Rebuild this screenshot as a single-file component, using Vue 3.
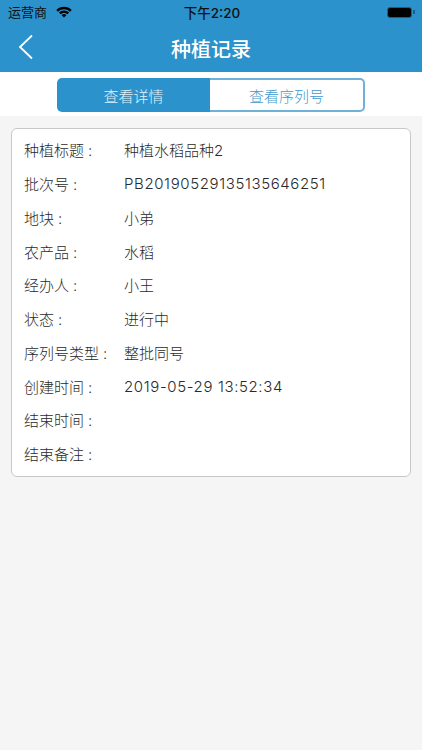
<script setup>
const rows = [
  { label: '种植标题', value: '种植水稻品种2' },
  { label: '批次号', value: 'PB20190529135135646251', spaced: true },
  { label: '地块', value: '小弟' },
  { label: '农产品', value: '水稻' },
  { label: '经办人', value: '小王' },
  { label: '状态', value: '进行中' },
  { label: '序列号类型', value: '整批同号' },
  { label: '创建时间', value: '2019-05-29 13:52:34', spaced: true },
  { label: '结束时间', value: '' },
  { label: '结束备注', value: '' },
]
</script>

<template>
  <div class="page">
    <header class="header">
      <div class="status">
        <div class="status-left">
          <span class="carrier">运营商</span>
          <svg class="wifi" width="16" height="12" viewBox="0 0 16 12">
            <path d="M0.3 3.9 A11 11 0 0 1 15.7 3.9 L14 5.7 A8.6 8.6 0 0 0 2 5.7 Z" fill="#000" />
            <path d="M3 6.6 A7.2 7.2 0 0 1 13 6.6 L11.3 8.3 A4.8 4.8 0 0 0 4.7 8.3 Z" fill="#000" />
            <path d="M5.6 9.2 A3.4 3.4 0 0 1 10.4 9.2 L8 11.6 Z" fill="#000" />
          </svg>
        </div>
        <span class="time">下午2:20</span>
        <div class="battery"><div class="battery-fill"></div><div class="battery-cap"></div></div>
      </div>
      <div class="nav">
        <svg class="back" width="16" height="26" viewBox="0 0 16 26">
          <path d="M14 1.5 L2 13 L14 24.5" fill="none" stroke="#fff" stroke-width="1.8" />
        </svg>
        <span class="title">种植记录</span>
      </div>
    </header>
    <div class="tabs-bar">
      <div class="tabs">
        <div class="tab active">查看详情</div>
        <div class="tab">查看序列号</div>
      </div>
    </div>
    <section class="card">
      <div v-for="r in rows" :key="r.label" class="row">
        <span class="label">{{ r.label }}<span class="colon">:</span></span>
        <span class="value" :class="{ spaced: r.spaced }">{{ r.value }}</span>
      </div>
    </section>
  </div>
</template>

<style>
html, body { margin: 0; background: #f5f5f5; }
</style>

<style scoped>
.page {
  width: 422px;
  height: 750px;
  background: #f5f5f5;
  font-family: Inter, "Noto Sans CJK SC", sans-serif;
  overflow: hidden;
}
.header { background: #2b92cc; height: 72px; }
.status {
  height: 24px;
  position: relative;
  display: flex;
  align-items: center;
  justify-content: space-between;
  padding: 0 7px 0 8px;
}
.status-left { display: flex; align-items: center; gap: 9px; }
.carrier { font-size: 13px; color: #111; line-height: 24px; }
.wifi { display: block; }
.time {
  position: absolute;
  left: 0;
  right: 0;
  text-align: center;
  font-size: 13.5px;
  font-weight: 500;
  color: #111;
  padding-left: 2px;
}
.battery {
  display: flex;
  align-items: center;
  width: 28px;
  height: 12px;
}
.battery-fill {
  width: 23px;
  height: 9px;
  background: #000;
  border: 1px solid #1c5f86;
  border-radius: 3px;
}
.battery-cap { width: 1.5px; height: 4px; background: #1c5f86; margin-left: 1px; }
.nav {
  height: 48px;
  position: relative;
  display: flex;
  align-items: center;
  justify-content: center;
}
.back { position: absolute; left: 18px; top: 10px; }
.title { color: #fff; font-size: 20px; font-weight: 500; }
.tabs-bar {
  background: #fff;
  height: 44px;
  padding-top: 6px;
  box-sizing: border-box;
  display: flex;
  justify-content: center;
  align-items: flex-start;
}
.tabs {
  width: 308px;
  height: 34px;
  display: flex;
}
.tab {
  flex: 1;
  box-sizing: border-box;
  display: flex;
  align-items: center;
  justify-content: center;
  font-size: 15px;
  font-weight: 300;
  color: #3f98cd;
  background: #fff;
  border: 2px solid #6fb2d8;
  border-left: none;
  border-radius: 0 5px 5px 0;
}
.tab.active {
  background: #2b92cc;
  color: #e3f1f9;
  border: none;
  border-radius: 5px 0 0 5px;
}
.card {
  margin: 12px 11px 0 11px;
  box-sizing: border-box;
  height: 349px;
  padding: 4px 12px 0 12px;
  background: #fff;
  border: 1px solid #c8c8c8;
  border-radius: 6px;
}
.row {
  display: flex;
  height: 33.75px;
  align-items: center;
  font-size: 15px;
  font-weight: 300;
  color: #2a2a2a;
}
.label { width: 100px; flex: none; }
.colon { margin-left: 4px; }
.value.spaced { letter-spacing: 0.62px; }
</style>
